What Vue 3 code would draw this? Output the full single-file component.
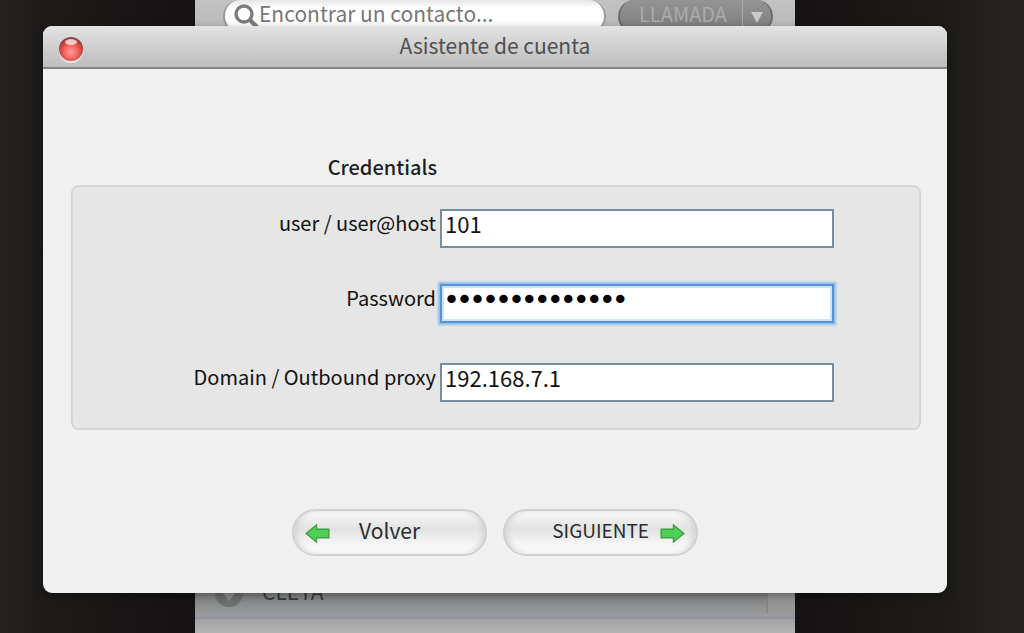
<script setup>
import { ref } from 'vue'

const search = ref('')
const user = ref('101')
const password = ref('a1b2c3d4e5f6g7')
const domain = ref('192.168.7.1')
</script>

<template>
  <div class="desktop">
    <div class="phone">
      <div class="toolbar">
        <label class="search">
          <svg class="lens" viewBox="0 0 26 26" aria-hidden="true">
            <circle cx="11" cy="11" r="8" fill="none" stroke="#7c7c7c" stroke-width="3.4" />
            <path d="M17 17L24 24" stroke="#7c7c7c" stroke-width="4.4" />
          </svg>
          <input v-model="search" type="text" placeholder="Encontrar un contacto..." aria-label="Encontrar un contacto" />
        </label>
        <button class="call" type="button">
          <span class="call-text">LLAMADA</span>
          <svg class="caret" viewBox="0 0 12 12" aria-hidden="true"><path d="M0 1H12L6 12Z" fill="#c9c9c9" /></svg>
        </button>
      </div>
      <div class="contacts">
        <div class="contact">
          <svg class="status" viewBox="0 0 28 28" aria-hidden="true">
            <circle cx="14" cy="14" r="14" fill="#6f7070" />
            <path d="M7 13L14 22L21 13L17 10H11Z" fill="#8f9090" />
          </svg>
          <span class="name">CLETA</span>
          <span class="scroll"></span>
        </div>
        <div class="strip"></div>
        <div class="footer"></div>
      </div>
    </div>

    <form class="dialog" @submit.prevent>
      <header class="titlebar">
        <button class="close" type="button" aria-label="Cerrar">
          <svg viewBox="0 0 26 28" aria-hidden="true">
            <defs>
              <radialGradient id="red" cx="50%" cy="62%" r="54%">
                <stop offset="0" stop-color="#ff9d96" />
                <stop offset="0.55" stop-color="#f4625c" />
                <stop offset="0.85" stop-color="#c9423f" />
                <stop offset="1" stop-color="#8c4340" />
              </radialGradient>
            </defs>
            <circle cx="13" cy="15" r="12" fill="#e9e9e9" />
            <circle cx="13" cy="13" r="12" fill="url(#red)" />
            <ellipse cx="13" cy="6" rx="6" ry="3" fill="#fff" opacity="0.7" />
          </svg>
        </button>
        <h1>Asistente de cuenta</h1>
      </header>

      <div class="body">
        <h2>Credentials</h2>
        <div class="panel">
          <label for="user">user / user@host</label>
          <input id="user" v-model="user" type="text" />
          <label for="password">Password</label>
          <input id="password" v-model="password" class="focused" type="password" />
          <label for="domain">Domain / Outbound proxy</label>
          <input id="domain" v-model="domain" type="text" />
        </div>
        <div class="actions">
          <button class="pill back" type="button">
            <svg class="arrow" viewBox="0 0 26 20" aria-hidden="true">
              <path d="M1 10L12 1V5.5H25V14.5H12V19Z" fill="#50cf56" stroke="#3da044" stroke-width="1.4" />
            </svg>
            <span>Volver</span>
          </button>
          <button class="pill next" type="submit">
            <span>SIGUIENTE</span>
            <svg class="arrow" viewBox="0 0 26 20" aria-hidden="true">
              <path d="M25 10L14 1V5.5H1V14.5H14V19Z" fill="#50cf56" stroke="#3da044" stroke-width="1.4" />
            </svg>
          </button>
        </div>
      </div>
    </form>
  </div>
</template>

<style>
body {
  margin: 0;
}
</style>

<style scoped>
.desktop {
  position: relative;
  min-height: 100vh;
  display: flex;
  background: linear-gradient(90deg, #252120 0, #1e1c1a 36px, #151313 180px, #151313 800px, #1d1c19 950px, #272322 1010px);
  font-family: "Noto Sans CJK JP", "Noto Sans", sans-serif;
  font-size: 21px;
  line-height: 28px;
  overflow: hidden;
}

* {
  box-sizing: border-box;
}

input,
button {
  font: inherit;
}

.phone {
  flex: 1;
  margin: 0 229px 0 195px;
  display: flex;
  flex-direction: column;
  justify-content: space-between;
  background: #c4c4c4;
}

.toolbar {
  display: flex;
  height: 33px;
  padding: 0 22px 0 28px;
  gap: 12px;
  background: linear-gradient(#c2c2c2, #b8b8b8);
}

.search {
  flex: 1;
  display: flex;
  align-items: center;
  height: 33px;
  padding: 0 8px;
  border: 2px solid #999;
  border-top-width: 0;
  border-radius: 17px;
  background: linear-gradient(#e6e6e6, #fff 8px);
}

.lens {
  width: 26px;
  height: 26px;
}

.search input {
  flex: 1;
  min-width: 0;
  height: 28px;
  margin-bottom: 6px;
  padding: 0;
  border: 0;
  outline: 0;
  background: transparent;
}

.search input::placeholder {
  color: #777;
  opacity: 1;
}

.call {
  display: flex;
  align-items: center;
  width: 155px;
  height: 33px;
  padding: 0 8px 0 0;
  border: 2px solid #6b6b6b;
  border-top-width: 0;
  border-radius: 17px;
  background: linear-gradient(#949494, #7d7d7d);
  color: #acacac;
  font-size: 20px;
}

.call-text {
  flex: 1;
  height: 28px;
  margin-bottom: 4px;
  padding-left: 4px;
  border-right: 1px solid #aaa;
}

.caret {
  width: 12px;
  height: 12px;
  margin: 3px 0 0 8px;
}

.contact {
  display: flex;
  align-items: center;
  height: 40px;
  padding-left: 20px;
  background: linear-gradient(#7f8081 18px, #959798);
  color: #3b3b3b;
}

.status {
  width: 28px;
  height: 28px;
}

.name {
  margin: 0 auto 4px 19px;
}

.scroll {
  width: 29px;
  height: 40px;
  border-left: 2px solid #858585;
  background: #979797;
}

.strip {
  height: 4px;
  background: #999a9b;
}

.footer {
  height: 16px;
  border-top: 2px solid #9392a0;
  background: linear-gradient(#a3a3a3, #b4b4b4);
}

.dialog {
  position: absolute;
  top: 26px;
  left: 43px;
  right: 77px;
  border-radius: 9px;
  overflow: hidden;
  background: #f0f0f0;
  box-shadow: 0 3px 10px rgba(0, 0, 0, 0.35);
}

.titlebar {
  display: flex;
  align-items: center;
  height: 43px;
  padding: 0 41px 0 15px;
  border-bottom: 2px solid #858585;
  background: linear-gradient(#e3e3e3, #bdbdbd);
}

.close {
  width: 26px;
  height: 28px;
  margin-top: 6px;
  padding: 0;
  border: 0;
  background: none;
}

.close svg {
  display: block;
  width: 26px;
  height: 28px;
}

h1 {
  flex: 1;
  margin: 0 0 4px;
  color: #4f4f4f;
  font-size: 21px;
  font-weight: 400;
  text-align: center;
}

.body {
  padding: 84px 26px 37px 28px;
}

h2 {
  width: 366px;
  margin: 0 0 4px;
  color: #1f1f1f;
  font-size: 20px;
  font-weight: 500;
  text-align: right;
}

.panel {
  display: grid;
  grid-template-columns: 363px 1fr;
  grid-template-rows: 75px 79px 39px;
  align-items: start;
  column-gap: 4px;
  padding: 22px 85px 26px 0;
  border: 2px solid #d5d5d5;
  border-radius: 8px;
  background: #e6e6e6;
}

.panel label {
  color: #111;
  font-size: 20px;
  text-align: right;
}

.panel input {
  width: 100%;
  min-width: 0;
  height: 39px;
  padding: 0 3px 11px;
  border: 2px solid #778e9f;
  border-radius: 0;
  outline: 0;
  background: #fff;
  color: #111;
  font-size: 22px;
}

.panel input.focused {
  padding-bottom: 8px;
  border-color: #5793d0;
  box-shadow: 0 0 2px 2px #8fbdec, inset 0 0 0 2px #cce2f8;
  color: #000;
  font-family: "DejaVu Sans", sans-serif;
  -webkit-text-stroke: 2px #000;
}

.actions {
  display: flex;
  justify-content: center;
  gap: 16px;
  margin-top: 79px;
  padding-right: 2px;
}

.pill {
  display: flex;
  align-items: center;
  width: 195px;
  height: 47px;
  padding: 0 11px;
  border: 2px solid #d0d0d0;
  border-radius: 24px;
  background: linear-gradient(#fafafa, #e2e2e2 42%, #f5f5f5 75%, #fafafa);
  box-shadow: inset 5px 0 6px -3px #d0d0d0, inset -5px 0 6px -3px #d0d0d0;
  color: #2b2b2b;
}

.pill span {
  margin-bottom: 5px;
}

.back {
  gap: 29px;
}

.next {
  justify-content: flex-end;
  gap: 11px;
  font-size: 19px;
}

.arrow {
  width: 25px;
  height: 19px;
  margin-top: 2px;
}
</style>
